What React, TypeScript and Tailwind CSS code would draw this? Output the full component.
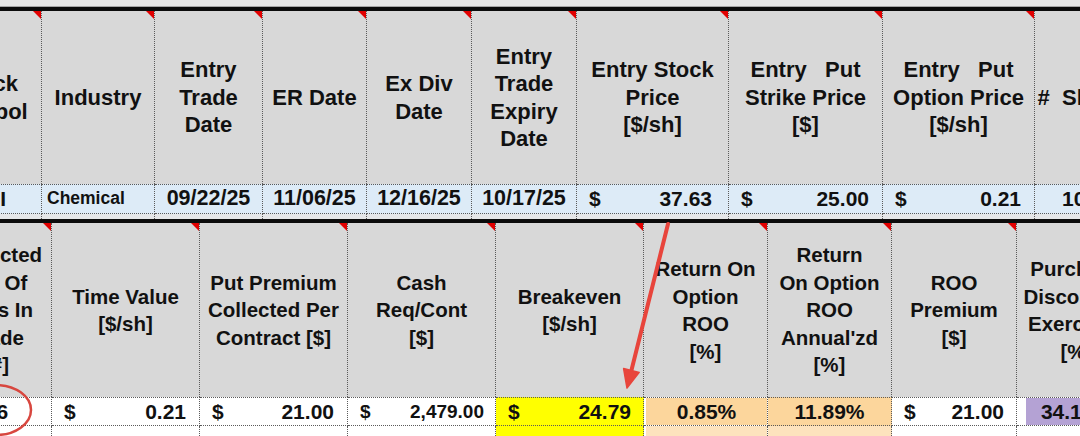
import React from "react";

function Tri() {
  return (
    <span className="absolute top-0 right-0 w-0 h-0 border-l-[8px] border-l-transparent border-t-[8px] border-t-[#e10000]" />
  );
}

function H({ lines, cls = "" }: { lines: string[]; cls?: string }) {
  return (
    <div
      className={
        "relative flex items-center justify-center text-center bg-[#d8d8d8] border-r border-dotted border-[#5a5a5a] whitespace-pre " +
        cls
      }
    >
      <Tri />
      <div>
        {lines.map((l, i) => (
          <div key={i}>{l}</div>
        ))}
      </div>
    </div>
  );
}

function Money({ v, cls = "", pr = "pr-[13px]" }: { v: string; cls?: string; pr?: string }) {
  return (
    <div
      className={
        "flex items-center justify-between pl-[12px] border-r border-y border-dotted border-[#5a5a5a] " +
        pr +
        " " +
        cls
      }
    >
      <span>$</span>
      <span>{v}</span>
    </div>
  );
}

function C({ v, cls = "" }: { v: string; cls?: string }) {
  return (
    <div
      className={
        "flex items-center justify-center border-r border-y border-dotted border-[#5a5a5a] whitespace-pre " +
        cls
      }
    >
      {v}
    </div>
  );
}

function G({ cls = "" }: { cls?: string }) {
  return <div className={"border-r border-dotted border-[#5a5a5a] " + cls} />;
}

export default function App() {
  return (
    <div
      className="relative w-[1080px] h-[436px] overflow-hidden bg-white text-[#111] font-bold"
      style={{ fontFamily: '"Liberation Sans", Arial, sans-serif' }}
    >
      <div className="h-[6px] bg-[#e6e6e6]" />
      <div className="h-[1px] bg-[#a5a5a5]" />
      <div className="h-[4px] bg-[#0b0b0b]" />

      {/* top table */}
      <div className="grid grid-cols-[107px_113px_108px_104px_105px_105px_152px_154px_152px_104px] -ml-[65px] w-max text-[22px] leading-[27.5px]">
        <H cls="h-[173px]" lines={["Stock", "Symbol"]} />
        <H cls="h-[173px]" lines={["Industry"]} />
        <H cls="h-[173px]" lines={["Entry", "Trade", "Date"]} />
        <H cls="h-[173px]" lines={["ER Date"]} />
        <H cls="h-[173px]" lines={["Ex Div", "Date"]} />
        <H cls="h-[173px]" lines={["Entry", "Trade", "Expiry", "Date"]} />
        <H cls="h-[173px]" lines={["Entry Stock", "Price", "[$/sh]"]} />
        <H cls="h-[173px]" lines={["Entry   Put", "Strike Price", "[$]"]} />
        <H cls="h-[173px]" lines={["Entry   Put", "Option Price", "[$/sh]"]} />
        <H cls="h-[173px]" lines={["#  Shares"]} />

        <C cls="h-[30px] bg-[#ddebf7] text-[21px]" v="DCI" />
        <div className="h-[30px] flex items-center pl-[5px] bg-[#ddebf7] text-[17.5px] border-r border-y border-dotted border-[#5a5a5a]">
          Chemical
        </div>
        <C cls="h-[30px] bg-[#ddebf7] text-[21.5px]" v="09/22/25" />
        <C cls="h-[30px] bg-[#ddebf7] text-[21.5px]" v="11/06/25" />
        <C cls="h-[30px] bg-[#ddebf7] text-[21.5px]" v="12/16/25" />
        <C cls="h-[30px] bg-[#ddebf7] text-[21.5px]" v="10/17/25" />
        <Money cls="h-[30px] bg-[#ddebf7] text-[21px]" pr="pr-[16px]" v="37.63" />
        <Money cls="h-[30px] bg-[#ddebf7] text-[21px]" v="25.00" />
        <Money cls="h-[30px] bg-[#ddebf7] text-[21px]" v="0.21" />
        <C cls="h-[30px] bg-[#ddebf7] text-[21px] pr-[14px]" v="100" />

        <G cls="h-[5px] bg-[#e4e6e8]" />
        <G cls="h-[5px] bg-[#e4e6e8]" />
        <G cls="h-[5px] bg-[#e4e6e8]" />
        <G cls="h-[5px] bg-[#e4e6e8]" />
        <G cls="h-[5px] bg-[#e4e6e8]" />
        <G cls="h-[5px] bg-[#e4e6e8]" />
        <G cls="h-[5px] bg-[#e4e6e8]" />
        <G cls="h-[5px] bg-[#e4e6e8]" />
        <G cls="h-[5px] bg-[#e4e6e8]" />
        <G cls="h-[5px] bg-[#e4e6e8]" />
      </div>

      <div className="h-[4px] bg-[#0b0b0b]" />

      {/* bottom table */}
      <div className="grid grid-cols-[110px_148px_148px_148px_148px_124px_124px_125px_120px] -ml-[58px] w-max text-[20.5px] leading-[27.5px]">
        <H cls="h-[174px]" lines={["Expected", "No. Of", "Days In", "Trade", "[#]"]} />
        <H cls="h-[174px]" lines={["Time Value", "[$/sh]"]} />
        <H cls="h-[174px]" lines={["Put Premium", "Collected Per", "Contract [$]"]} />
        <H cls="h-[174px]" lines={["Cash", "Req/Cont", "[$]"]} />
        <H cls="h-[174px]" lines={["Breakeven", "[$/sh]"]} />
        <H cls="h-[174px]" lines={["Return On", "Option", "ROO", "[%]"]} />
        <H cls="h-[174px]" lines={["Return", "On Option", "ROO", "Annual'zd", "[%]"]} />
        <H cls="h-[174px]" lines={["ROO", "Premium", "[$]"]} />
        <H cls="h-[174px]" lines={["Purchase", "Discount If", "Exercised", "[%]"]} />

        <C cls="h-[29px] bg-white text-[21px]" v="26" />
        <Money cls="h-[29px] bg-white text-[21px]" v="0.21" />
        <Money cls="h-[29px] bg-white text-[21px]" v="21.00" />
        <Money cls="h-[29px] bg-white text-[19px]" pr="pr-[11px]" v="2,479.00" />
        <Money cls="h-[29px] bg-[#ffff00] text-[21px]" pr="pr-[12px]" v="24.79" />
        <div className="h-[29px] border-r border-y border-dotted border-[#5a5a5a] bg-white">
          <div className="ml-[2px] h-full flex items-center justify-center bg-[#fcd69c] text-[21px]">0.85%</div>
        </div>
        <C cls="h-[29px] bg-[#fcd69c] text-[21px]" v="11.89%" />
        <Money cls="h-[29px] bg-white text-[21px]" pr="pr-[12px]" v="21.00" />
        <div className="h-[29px] border-r border-y border-dotted border-[#5a5a5a] bg-white">
          <div className="ml-[9px] h-full flex items-center justify-center pr-[9px] bg-[#b4a2d4] text-[21px]">34.16%</div>
        </div>

        <G cls="h-[10px] bg-white" />
        <G cls="h-[10px] bg-white" />
        <G cls="h-[10px] bg-white" />
        <G cls="h-[10px] bg-white" />
        <G cls="h-[10px] bg-[#ffff00]" />
        <div className="h-[10px] border-r border-dotted border-[#5a5a5a] bg-white">
          <div className="ml-[2px] h-full bg-[#fde3bd]" />
        </div>
        <G cls="h-[10px] bg-[#fde3bd]" />
        <G cls="h-[10px] bg-white" />
        <G cls="h-[10px] bg-white" />
      </div>

      {/* annotations */}
      <svg
        className="absolute left-0 top-0 pointer-events-none"
        width="1080"
        height="436"
        viewBox="0 0 1080 436"
      >
        <ellipse cx="-4" cy="410" rx="35" ry="25" fill="none" stroke="#d8473f" strokeWidth="2.5" />
        <line x1="668" y1="224" x2="631.4" y2="370.5" stroke="#e8453c" strokeWidth="4" strokeLinecap="round" />
        <polygon points="627,388 639.2,372.4 623.6,368.6" fill="#e8453c" stroke="#e8453c" strokeWidth="1.5" strokeLinejoin="round" />
      </svg>
    </div>
  );
}
